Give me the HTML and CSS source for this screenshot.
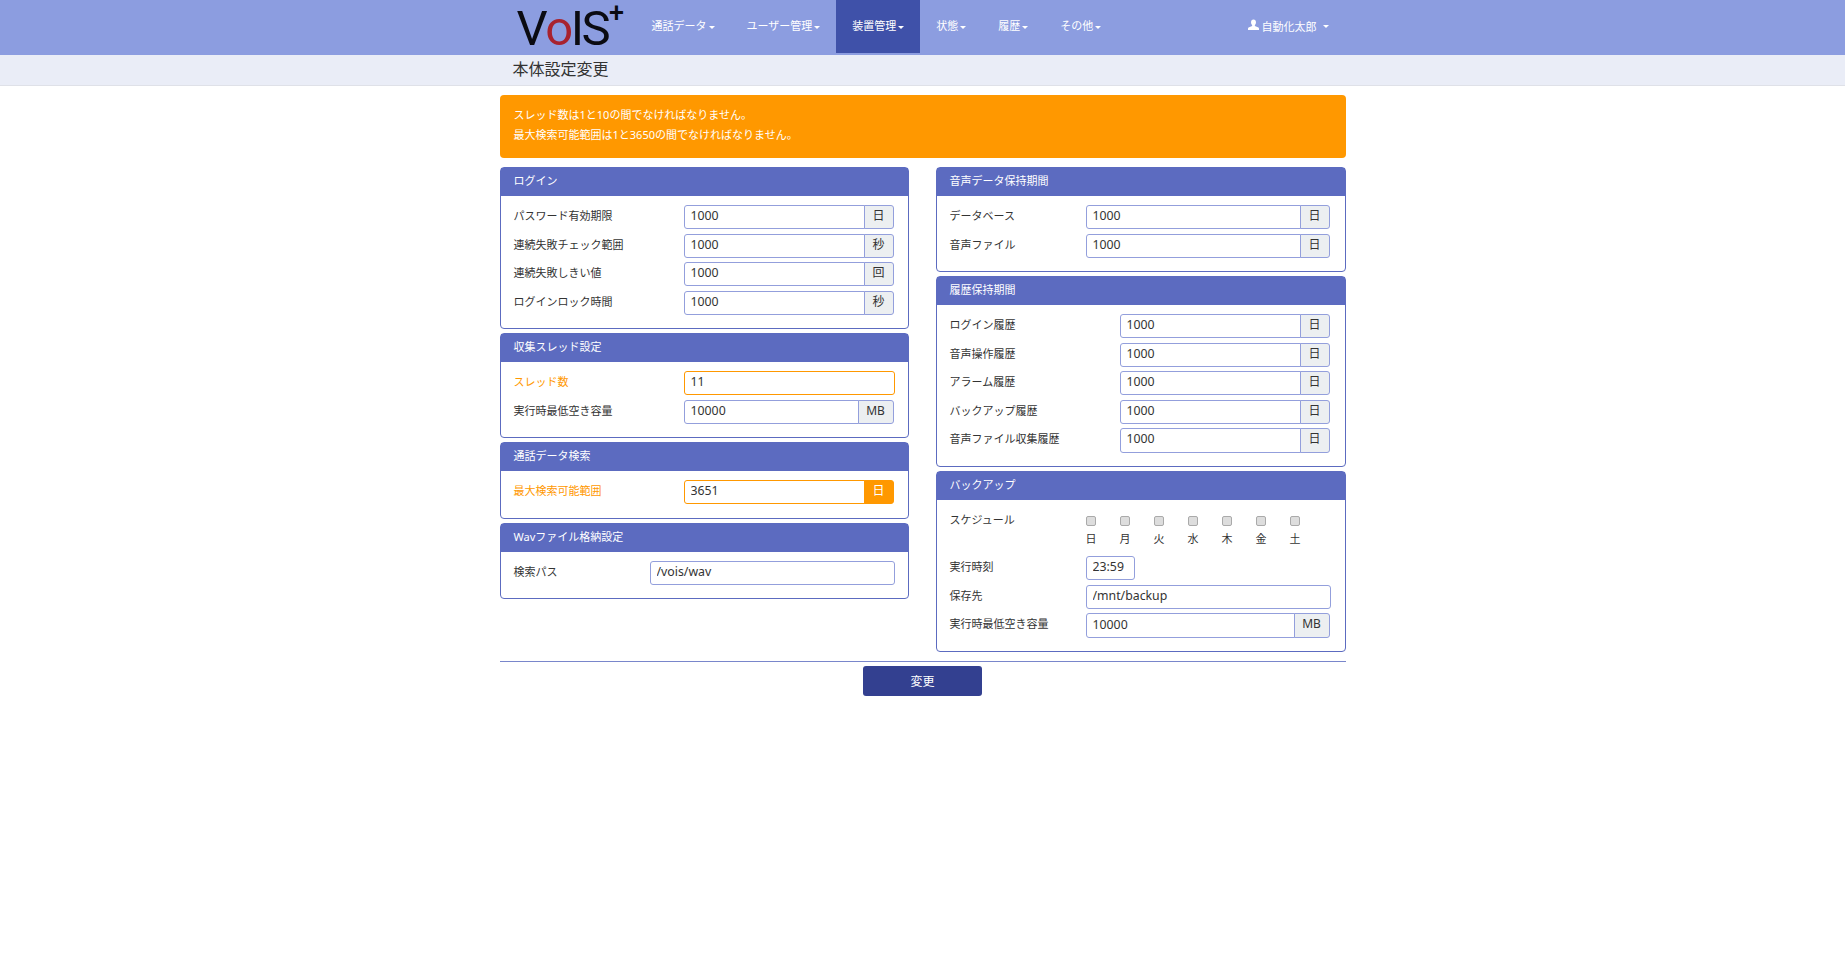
FILE: index.html
```html
<!DOCTYPE html>
<html lang="ja">
<head>
    <meta charset="UTF-8">
    <title>本体設定変更</title>
    <link rel="stylesheet" href="styles.css">
</head>
<body>

<!-- Navigation -->
<nav class="navbar">
    <div class="container navbar-inner">
        <a class="logo"><span>V</span><span class="logo-o">o</span><span>IS</span><span class="logo-plus">+</span></a>
        <ul class="nav">
            <li><a>通話データ<i class="caret"></i></a></li>
            <li><a>ユーザー管理<i class="caret"></i></a></li>
            <li class="active"><a>装置管理<i class="caret"></i></a></li>
            <li><a>状態<i class="caret"></i></a></li>
            <li><a>履歴<i class="caret"></i></a></li>
            <li><a>その他<i class="caret"></i></a></li>
        </ul>
        <a class="user">
            <svg class="user-icon" viewBox="0 0 12 12"><path d="M6 0C4.200 0 3.300 1.300 3.300 3c0 1.300.5 2.400 1.200 3.100v1L.6 8.800C.2 9 0 9.400 0 10v1.500h12V10c0-.6-.2-1-.6-1.200L7.500 7.100v-1C8.200 5.400 8.700 4.300 8.700 3 8.700 1.300 7.800 0 6 0z"/></svg>
            自動化太郎<i class="caret caret-user"></i>
        </a>
    </div>
</nav>

<!-- Page title -->
<div class="title-bar">
    <div class="container"><h1>本体設定変更</h1></div>
</div>

<div class="container main">
    <div class="alert">
        <p>スレッド数は1と10の間でなければなりません。</p>
        <p>最大検索可能範囲は1と3650の間でなければなりません。</p>
    </div>

    <div class="columns">
        <div class="column">
            <section class="panel">
                <h2>ログイン</h2>
                <div class="panel-body">
                    <div class="row row-170"><label>パスワード有効期限</label><div class="group"><input value="1000"><span class="addon">日</span></div></div>
                    <div class="row row-170"><label>連続失敗チェック範囲</label><div class="group"><input value="1000"><span class="addon">秒</span></div></div>
                    <div class="row row-170"><label>連続失敗しきい値</label><div class="group"><input value="1000"><span class="addon">回</span></div></div>
                    <div class="row row-170"><label>ログインロック時間</label><div class="group"><input value="1000"><span class="addon">秒</span></div></div>
                </div>
            </section>
            <section class="panel">
                <h2>収集スレッド設定</h2>
                <div class="panel-body">
                    <div class="row row-170 has-error"><label>スレッド数</label><input class="solo" value="11"></div>
                    <div class="row row-170"><label>実行時最低空き容量</label><div class="group"><input value="10000"><span class="addon addon-mb">MB</span></div></div>
                </div>
            </section>
            <section class="panel">
                <h2>通話データ検索</h2>
                <div class="panel-body">
                    <div class="row row-170 has-error"><label>最大検索可能範囲</label><div class="group"><input value="3651"><span class="addon">日</span></div></div>
                </div>
            </section>
            <section class="panel">
                <h2>Wavファイル格納設定</h2>
                <div class="panel-body">
                    <div class="row row-136"><label>検索パス</label><input class="solo" value="/vois/wav"></div>
                </div>
            </section>
        </div>

        <div class="column column-right">
            <section class="panel">
                <h2>音声データ保持期間</h2>
                <div class="panel-body">
                    <div class="row row-136"><label>データベース</label><div class="group"><input value="1000"><span class="addon">日</span></div></div>
                    <div class="row row-136"><label>音声ファイル</label><div class="group"><input value="1000"><span class="addon">日</span></div></div>
                </div>
            </section>
            <section class="panel">
                <h2>履歴保持期間</h2>
                <div class="panel-body">
                    <div class="row row-170"><label>ログイン履歴</label><div class="group"><input value="1000"><span class="addon">日</span></div></div>
                    <div class="row row-170"><label>音声操作履歴</label><div class="group"><input value="1000"><span class="addon">日</span></div></div>
                    <div class="row row-170"><label>アラーム履歴</label><div class="group"><input value="1000"><span class="addon">日</span></div></div>
                    <div class="row row-170"><label>バックアップ履歴</label><div class="group"><input value="1000"><span class="addon">日</span></div></div>
                    <div class="row row-170"><label>音声ファイル収集履歴</label><div class="group"><input value="1000"><span class="addon">日</span></div></div>
                </div>
            </section>
            <section class="panel">
                <h2>バックアップ</h2>
                <div class="panel-body">
                    <div class="row row-136 row-schedule">
                        <label>スケジュール</label>
                        <div class="days">
                            <div class="day"><input type="checkbox"><span>日</span></div>
                            <div class="day"><input type="checkbox"><span>月</span></div>
                            <div class="day"><input type="checkbox"><span>火</span></div>
                            <div class="day"><input type="checkbox"><span>水</span></div>
                            <div class="day"><input type="checkbox"><span>木</span></div>
                            <div class="day"><input type="checkbox"><span>金</span></div>
                            <div class="day"><input type="checkbox"><span>土</span></div>
                        </div>
                    </div>
                    <div class="row row-136"><label>実行時刻</label><input class="time" value="23:59"></div>
                    <div class="row row-136"><label>保存先</label><input class="solo" value="/mnt/backup"></div>
                    <div class="row row-136"><label>実行時最低空き容量</label><div class="group"><input value="10000"><span class="addon addon-mb">MB</span></div></div>
                </div>
            </section>
        </div>
    </div>

    <!-- Submit -->
    <div class="footer">
        <button type="button">変更</button>
    </div>
</div>

</body>
</html>
```

FILE: styles.css
```css
* {
    box-sizing: border-box;
}
body {
    margin: 0;
    background-color: #fff;
    color: #333;
    font-family: "Noto Sans", "Noto Sans CJK JP", sans-serif;
    font-size: 11px;
}
.container {
    width: 846px;
    margin: 0 auto;
}

/* navbar */
.navbar {
    height: 55px;
    background-color: #8c9de0;
}
.navbar-inner {
    display: flex;
    height: 55px;
}
.logo {
    display: flex;
    width: 136px;
    padding: 4px 0 0 17px;
    color: #0b0b12;
    font-family: Roboto, sans-serif;
    font-size: 49px;
    letter-spacing: -2.5px;
    line-height: 50px;
}
.logo-o {
    color: #a8222e;
}
.logo-plus {
    margin: -6px 0 0 1px;
    font-size: 27px;
    font-weight: 500;
    line-height: 30px;
}
.nav {
    display: flex;
    height: 53px;
    margin: 0;
    padding: 0;
    list-style: none;
}
.nav a {
    display: block;
    padding: 0 16px;
    color: #fff;
    line-height: 52px;
}
.nav .active {
    background-color: #3f51a9;
}
.caret {
    display: inline-block;
    margin-left: 2px;
    vertical-align: middle;
    border-top: 3px solid #fff;
    border-left: 3px solid transparent;
    border-right: 3px solid transparent;
}
.user {
    display: flex;
    align-items: center;
    height: 52px;
    margin-left: auto;
    margin-right: 17px;
    color: #fff;
}
.user-icon {
    width: 11px;
    height: 12px;
    margin: -3px 3px 0 0;
    fill: #fff;
}
.caret-user {
    margin-left: 6px;
}

/* title */
.title-bar {
    height: 31px;
    background-color: #eaedf7;
    border-bottom: 1px solid #dfe1e8;
}
.title-bar h1 {
    margin: 0;
    padding-left: 13px;
    font-size: 16px;
    font-weight: normal;
    line-height: 29px;
}

/* alert */
.main {
    padding-top: 9px;
}
.alert {
    height: 63px;
    padding: 10px 14px;
    background-color: #ff9800;
    border-radius: 4px;
    color: #fff;
}
.alert p {
    margin: 0;
    line-height: 20px;
}

/* panels */
.columns {
    display: grid;
    grid-template-columns: 409px 410px;
    column-gap: 27px;
    margin-top: 9px;
}
.panel {
    margin-bottom: 4px;
    border: 1px solid #5c6bc0;
    border-radius: 4px;
}
.panel h2 {
    height: 28px;
    margin: 0;
    padding-left: 13px;
    background-color: #5c6bc0;
    color: #fff;
    font-size: 11px;
    font-weight: normal;
    line-height: 25px;
}
.panel-body {
    display: flex;
    flex-direction: column;
    gap: 4.4px;
    padding: 9px 13px 13.3px;
}
.column-right .panel-body {
    padding-right: 14px;
}
.row {
    display: grid;
    align-items: start;
}
.row label {
    line-height: 21px;
}
.row-170 {
    grid-template-columns: 170px 1fr;
}
.row-136 {
    grid-template-columns: 136px 1fr;
}
.has-error label {
    color: #ff9800;
}
input {
    height: 24.2px;
    padding: 0 5px 3px 6px;
    border: 1px solid #939fdc;
    border-radius: 3px;
    outline: none;
    color: #333;
    font-family: inherit;
    font-size: 12.3px;
}
.solo {
    width: 100%;
}
.time {
    width: 49px;
}
.group {
    display: flex;
    min-width: 0;
    padding-right: 1px;
}
.group input {
    flex: 1;
    min-width: 0;
    border-radius: 3px 0 0 3px;
}
.addon {
    flex: none;
    width: 30px;
    height: 24.2px;
    margin-left: -1px;
    background-color: #eceff1;
    border: 1px solid #939fdc;
    border-radius: 0 3px 3px 0;
    font-size: 12px;
    line-height: 20px;
    text-align: center;
}
.addon-mb {
    width: 36px;
}
.has-error input {
    border-color: #ff9800;
}
.has-error .addon {
    background-color: #ff9800;
    border-color: #ff9800;
    color: #fff;
}
.row-schedule {
    height: 43px;
}
.days {
    display: flex;
    padding-top: 7px;
}
.day {
    display: flex;
    flex-direction: column;
    width: 34px;
}
.day input {
    appearance: none;
    width: 10px;
    height: 10px;
    margin: 0 0 5px;
    padding: 0;
    background-color: #ddd;
    border: 1px solid #aaa;
    border-radius: 2px;
}
.day span {
    line-height: 16px;
}

/* submit */
.footer {
    margin-top: 5px;
    padding-top: 4px;
    border-top: 1px solid #7986cb;
    text-align: center;
}
button {
    width: 119px;
    height: 30px;
    background-color: #334090;
    border: none;
    border-radius: 3px;
    color: #fff;
    font-family: inherit;
    font-size: 12px;
}
```
